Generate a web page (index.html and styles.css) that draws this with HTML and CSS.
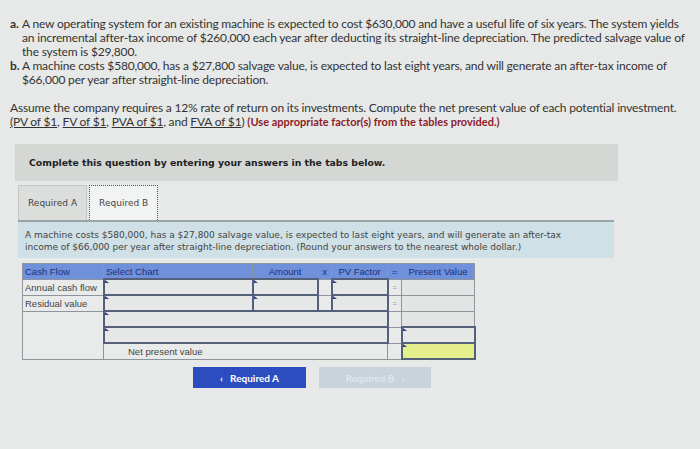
FILE: index.html
```html
<!DOCTYPE html>
<html lang="en">
<head>
  <meta charset="UTF-8">
  <title>Net Present Value</title>
  <link rel="stylesheet" href="styles.css">
</head>
<body>
  <!-- Question text -->
  <div class="question">
    <div class="part"><b class="mark">a.</b><span>A new operating system for an existing machine is expected to cost $630,000 and have a useful life of six years. The system yields an incremental after-tax income of $260,000 each year after deducting its straight-line depreciation. The predicted salvage value of the system is $29,800.</span></div>
    <div class="part"><b class="mark">b.</b><span>A machine costs $580,000, has a $27,800 salvage value, is expected to last eight years, and will generate an after-tax income of $66,000 per year after straight-line depreciation.</span></div>
    <p class="assume">Assume the company requires a 12% rate of return on its investments. Compute the net present value of each potential investment.<br>
      <a href="#">(PV of $1</a>, <a href="#">FV of $1</a>, <a href="#">PVA of $1</a>, and <a href="#">FVA of $1</a>) <b class="hint">(Use appropriate factor(s) from the tables provided.)</b></p>
  </div>

  <!-- Instructions -->
  <div class="banner">Complete this question by entering your answers in the tabs below.</div>

  <!-- Tabs -->
  <div class="tabs">
    <div class="tab">Required A</div>
    <div class="tab active">Required B</div>
  </div>
  <div class="info">A machine costs $580,000, has a $27,800 salvage value, is expected to last eight years, and will generate an after-tax income of $66,000 per year after straight-line depreciation. (Round your answers to the nearest whole dollar.)</div>

  <!-- Answer grid -->
  <table class="grid">
    <tr class="head">
      <th class="c-flow">Cash Flow</th>
      <th class="c-chart">Select Chart</th>
      <th class="c-amt">Amount</th>
      <th class="c-op">x</th>
      <th class="c-pv">PV Factor</th>
      <th class="c-op">=</th>
      <th class="c-val">Present Value</th>
    </tr>
    <tr>
      <td>Annual cash flow</td>
      <td class="input"></td>
      <td class="input"></td>
      <td></td>
      <td class="input"></td>
      <td class="eq">=</td>
      <td class="out"></td>
    </tr>
    <tr>
      <td>Residual value</td>
      <td class="input"></td>
      <td class="input"></td>
      <td></td>
      <td class="input"></td>
      <td class="eq">=</td>
      <td class="out"></td>
    </tr>
    <tr>
      <td rowspan="3"></td>
      <td class="input" colspan="4"></td>
      <td></td>
      <td class="out"></td>
    </tr>
    <tr>
      <td class="input" colspan="4"></td>
      <td></td>
      <td class="input"></td>
    </tr>
    <tr>
      <td class="npv" colspan="4">Net present value</td>
      <td></td>
      <td class="input total"></td>
    </tr>
  </table>

  <!-- Navigation -->
  <div class="nav">
    <div class="btn prev">&#8249;&nbsp;&nbsp;&nbsp;Required A</div>
    <div class="btn next">Required B&nbsp;&nbsp;&nbsp;&#8250;</div>
  </div>
</body>
</html>
```

FILE: styles.css
```css
body
{
  margin: 0;
  padding: 17px 12px 0 10px;
  background: #e7e9e8;
  color: #333;
  font-family: "Lato", sans-serif;
}

/* Question text */
.question
{
  font-size: 12px;
  line-height: 14px;
  letter-spacing: -0.18px;
}

.part
{
  display: flex;
}

.part .mark
{
  width: 12px;
  flex-shrink: 0;
}

.assume
{
  margin: 14px 0 0 0;
}

.assume a
{
  color: #333;
}

.hint
{
  color: #8c1c2a;
  font-size: 11px;
  letter-spacing: 0;
}

/* Instruction banner */
.banner
{
  margin: 15px 70px 0 5px;
  height: 37px;
  padding-left: 14px;
  display: flex;
  align-items: center;
  background: #d5d7d5;
  font-family: "DejaVu Sans", sans-serif;
  font-weight: bold;
  font-size: 9.3px;
  color: #222;
}

/* Tabs */
.tabs
{
  display: flex;
  margin: 4px 74px 0 8px;
  border-bottom: 2px solid #9aa3aa;
}

.tab
{
  height: 34px;
  display: flex;
  align-items: center;
  padding: 0 9px;
  font-family: "DejaVu Sans", sans-serif;
  font-size: 9px;
  color: #444;
  background: #dcdedc;
  border: 1px solid #c6c8c6;
  border-bottom: none;
}

.tab.active
{
  margin-left: 2px;
  background: #f2f4f3;
  border: 1px dotted #555;
  border-bottom: none;
}

.info
{
  margin: 0 74px 0 8px;
  height: 36px;
  box-sizing: border-box;
  padding: 7px 30px 0 7px;
  background: #cfe0e6;
  font-family: "DejaVu Sans", sans-serif;
  font-size: 9px;
  line-height: 12px;
  color: #444;
}

/* Answer grid */
.grid
{
  margin: 5px 0 0 12px;
  border-collapse: collapse;
  font-family: "Liberation Sans", sans-serif;
  font-size: 9.5px;
  background: #e9ebea;
}

.grid th,
.grid td
{
  border: 1px solid #8d949c;
  padding: 0 2px;
  height: 14px;
  text-align: left;
  color: #444;
}

.grid .head th
{
  background: #6f90da;
  color: #1c2f7e;
  font-weight: normal;
  height: 14px;
}

.grid .c-flow { width: 76px; }
.grid .c-chart { width: 144px; }
.grid .c-amt { width: 60px; text-align: center; }
.grid .c-op { width: 9px; text-align: center; }
.grid .c-pv { width: 51px; text-align: center; }
.grid .c-val { width: 68px; text-align: center; }

.grid td.input
{
  border: 2px solid #55607a;
  background: #e6e8e8;
  position: relative;
}

.grid td.input::before
{
  content: "";
  position: absolute;
  top: 0;
  left: 0;
  border-style: solid;
  border-width: 3px 0 0 4px;
  border-color: transparent transparent transparent #2a3f9a;
}

.grid td.eq
{
  text-align: center;
  color: #9aa0a0;
  font-size: 8px;
}

.grid td.out
{
  background: #e3e5e4;
}

.grid td.total
{
  background: #e4ee8c;
}

.grid td.npv
{
  padding-left: 24px;
  border: 1px solid #8d949c;
}

/* Navigation buttons */
.nav
{
  display: flex;
  gap: 13px;
  margin: 7px 0 0 183px;
}

.btn
{
  width: 113px;
  height: 21px;
  display: flex;
  align-items: center;
  justify-content: center;
  font-family: "Lato", sans-serif;
  font-weight: bold;
  font-size: 10px;
}

.btn.prev
{
  background: #2c4dbf;
  color: #fff;
}

.btn.next
{
  width: 112px;
  background: #c9d3dc;
  color: #dfe6ec;
}
```
